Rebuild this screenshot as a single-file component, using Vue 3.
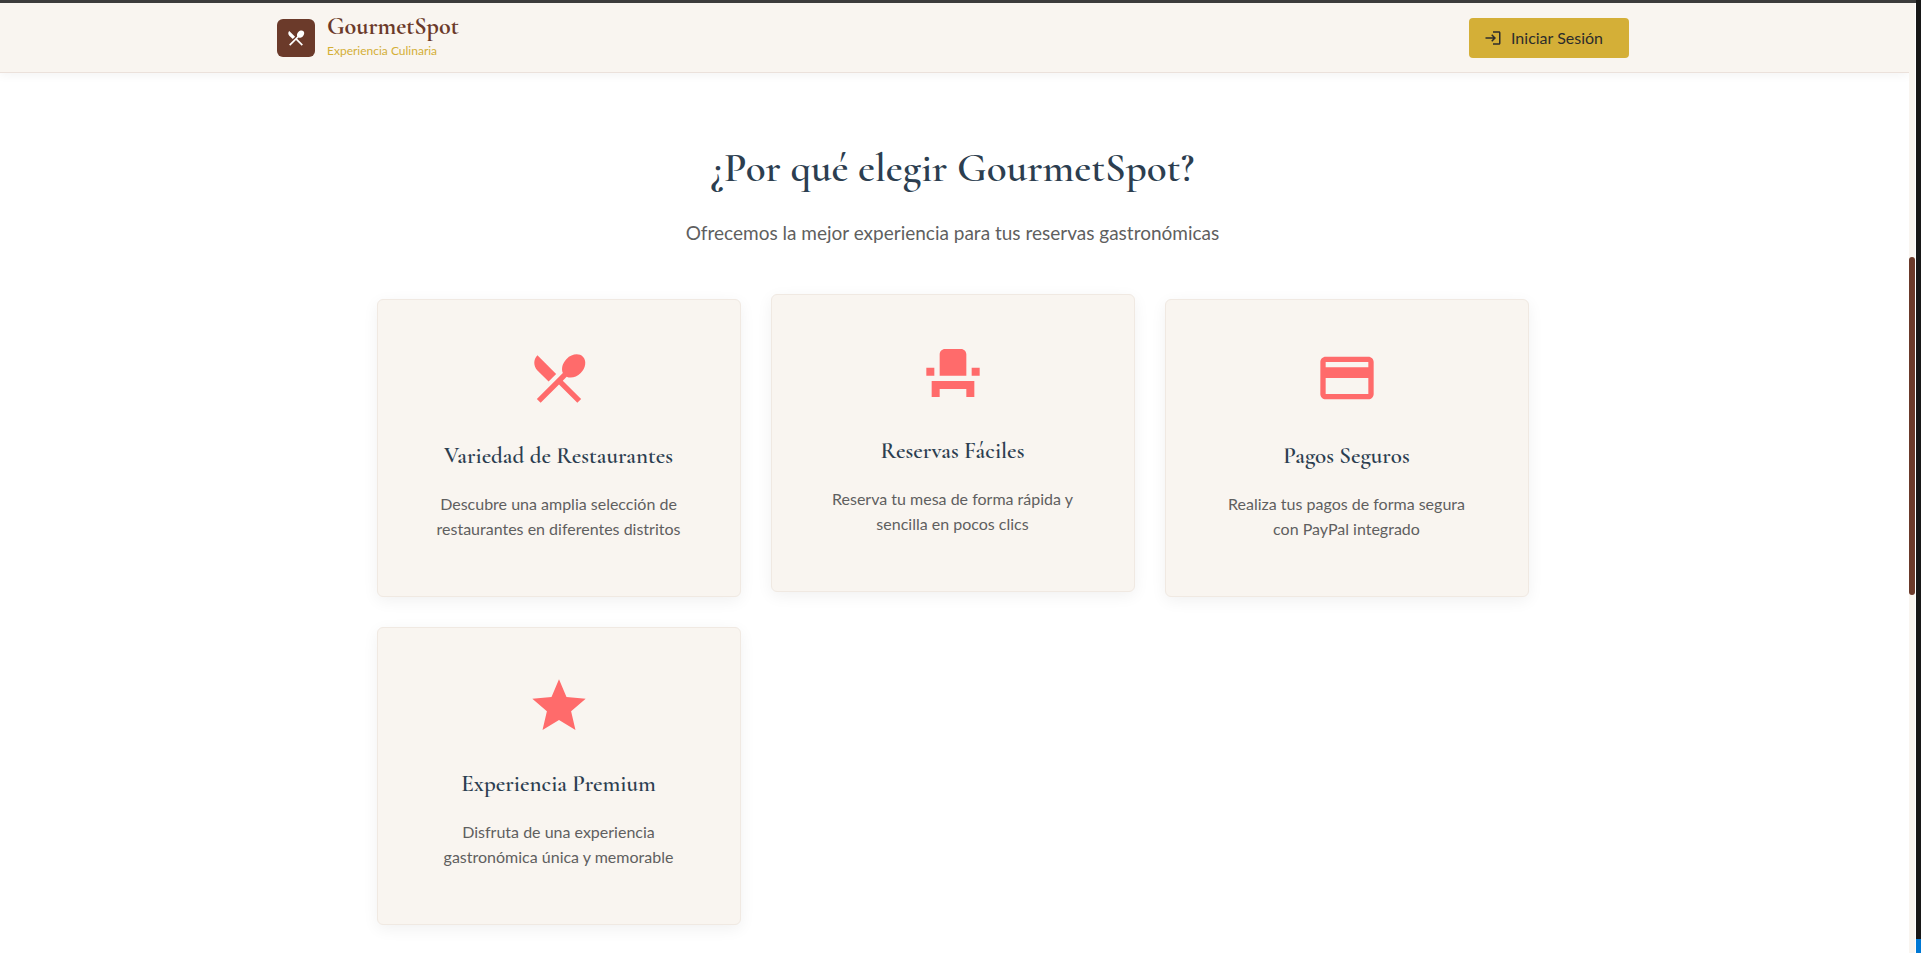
<script setup>
const features = [
  {
    title: 'Variedad de Restaurantes',
    lines: ['Descubre una amplia selección de', 'restaurantes en diferentes distritos'],
    icon: 'M8.1 13.34l2.83-2.83L3.91 3.5c-1.56 1.56-1.56 4.09 0 5.66l4.19 4.18zm6.78-1.81c1.53.71 3.68.21 5.27-1.38 1.91-1.91 2.28-4.65.81-6.12-1.46-1.46-4.2-1.1-6.12.81-1.59 1.59-2.09 3.74-1.38 5.27L3.7 19.87l1.41 1.41L12 14.41l6.88 6.88 1.41-1.41L13.41 13l1.47-1.47z'
  },
  {
    title: 'Reservas Fáciles',
    lines: ['Reserva tu mesa de forma rápida y', 'sencilla en pocos clics'],
    icon: 'M4 18v3h3v-3h10v3h3v-6H4zm15-8h3v3h-3zM2 10h3v3H2zm15 3H7V5c0-1.1.9-2 2-2h6c1.1 0 2 .9 2 2v8z',
    raised: true
  },
  {
    title: 'Pagos Seguros',
    lines: ['Realiza tus pagos de forma segura', 'con PayPal integrado'],
    icon: 'M20 4H4c-1.11 0-1.99.89-1.99 2L2 18c0 1.11.89 2 2 2h16c1.11 0 2-.89 2-2V6c0-1.11-.89-2-2-2zm0 14H4v-6h16v6zm0-10H4V6h16v2z'
  },
  {
    title: 'Experiencia Premium',
    lines: ['Disfruta de una experiencia', 'gastronómica única y memorable'],
    icon: 'M12 17.27L18.18 21l-1.64-7.03L22 9.24l-7.19-.61L12 2 9.19 8.63 2 9.24l5.46 4.73L5.82 21z'
  }
]
</script>

<template>
  <div class="screen">
    <div class="window">
      <div class="top-strip"></div>
      <div class="viewport">
        <div class="page">
          <header class="header">
            <div class="header-inner">
              <a class="brand" href="#">
                <span class="mark">
                  <svg viewBox="0 0 24 24" aria-hidden="true"><path :d="features[0].icon" /></svg>
                </span>
                <span class="brand-text">
                  <span class="name">GourmetSpot</span>
                  <span class="tagline">Experiencia Culinaria</span>
                </span>
              </a>
              <button class="login" type="button">
                <svg viewBox="0 0 24 24" aria-hidden="true">
                  <path d="M11 7 9.6 8.4l2.6 2.6H2v2h10.2l-2.6 2.6L11 17l5-5-5-5zm9 12h-8v2h8c1.1 0 2-.9 2-2V5c0-1.1-.9-2-2-2h-8v2h8v14z" />
                </svg>
                Iniciar Sesión
              </button>
            </div>
          </header>
          <main class="why">
            <h1>¿Por qué elegir GourmetSpot?</h1>
            <p class="lead">Ofrecemos la mejor experiencia para tus reservas gastronómicas</p>
            <div class="grid">
              <article v-for="f in features" :key="f.title" class="card" :class="{ raised: f.raised }">
                <svg viewBox="0 0 24 24" aria-hidden="true"><path :d="f.icon" /></svg>
                <h2>{{ f.title }}</h2>
                <p>{{ f.lines[0] }}<br />{{ f.lines[1] }}</p>
              </article>
            </div>
          </main>
        </div>
        <div class="track"><div class="thumb"></div></div>
      </div>
    </div>
    <div class="edge"><div class="edge-accent"></div></div>
  </div>
</template>

<style>
body {
  margin: 0;
  overflow: hidden;
}
</style>

<style scoped>
.screen {
  display: flex;
  height: 100vh;
  background: #fff;
  font-family: Lato, "Liberation Sans", sans-serif;
  color: #5f5f5f;
}
.window {
  flex: 1;
  min-width: 0;
  display: flex;
  flex-direction: column;
}
.top-strip {
  flex: none;
  height: 3px;
  background: #3c3c3c;
}
.viewport {
  flex: 1;
  min-height: 0;
  display: flex;
}
.page {
  flex: 1;
  min-width: 0;
  overflow: hidden;
}
.header {
  box-sizing: border-box;
  height: 70px;
  padding: 0 27px 0 24px;
  background: #f9f5f0;
  border-bottom: 1px solid #ebe1db;
  box-shadow: 0 2px 10px rgba(0, 0, 0, 0.05);
}
.header-inner {
  max-width: 1352px;
  height: 100%;
  margin: 0 auto;
  display: flex;
  align-items: center;
  justify-content: space-between;
}
.brand {
  display: flex;
  align-items: center;
  gap: 12px;
  text-decoration: none;
}
.mark {
  display: flex;
  align-items: center;
  justify-content: center;
  width: 38px;
  height: 38px;
  border-radius: 6px;
  background: #6b3a2a;
}
.mark svg {
  width: 20px;
  height: 20px;
  fill: #fff;
}
.brand-text {
  display: flex;
  flex-direction: column;
}
.name {
  font: 700 24px/30px "Cormorant Garamond", "Liberation Serif", serif;
  color: #6b3a2a;
}
.tagline {
  padding-bottom: 4px;
  font-size: 12px;
  line-height: 18px;
  color: #d4af37;
}
.login {
  display: flex;
  align-items: center;
  gap: 9px;
  height: 40px;
  padding: 0 26px 0 15px;
  border: 0;
  border-radius: 4px;
  background: #d4af37;
  color: #2c2c2c;
  font: 400 16px/24px Lato, "Liberation Sans", sans-serif;
}
.login svg {
  width: 18px;
  height: 18px;
  fill: currentColor;
}
.why {
  padding: 64px 28px 29px 24px;
  text-align: center;
}
h1 {
  margin: 0;
  font: 600 41px/62px "Cormorant Garamond", "Liberation Serif", serif;
  color: #2c3e50;
}
.lead {
  margin: 18px 0 50px;
  font-size: 19px;
  line-height: 32px;
}
.grid {
  max-width: 1152px;
  margin: 0 auto;
  display: grid;
  grid-template-columns: repeat(3, 1fr);
  gap: 30px;
}
.card {
  box-sizing: border-box;
  padding: 46px 24px;
  border: 1px solid #f0e9e2;
  border-radius: 6px;
  background: #f9f5f0;
  box-shadow: 0 4px 16px rgba(0, 0, 0, 0.06);
}
.raised {
  transform: translateY(-5px);
}
.card svg {
  display: block;
  width: 64px;
  height: 64px;
  margin: 0 auto 27px;
  fill: #ff6b6b;
}
h2 {
  margin: 0 0 16px;
  font: 600 23px/38px "Cormorant Garamond", "Liberation Serif", serif;
  color: #2c3e50;
}
.card p {
  margin: 0;
  padding-bottom: 9px;
  font-size: 16px;
  line-height: 25px;
}
.track {
  display: flow-root;
  width: 6px;
  margin-right: 1px;
  background: #f9f5f0;
}
.thumb {
  height: calc(100% * 338 / 950);
  margin-top: 254px;
  border-radius: 3px;
  background: #6b3a2a;
}
.edge {
  width: 5px;
  display: flex;
  flex-direction: column;
  justify-content: flex-end;
  background: #181818;
}
.edge-accent {
  height: 14px;
  background: #0078d4;
}
</style>
